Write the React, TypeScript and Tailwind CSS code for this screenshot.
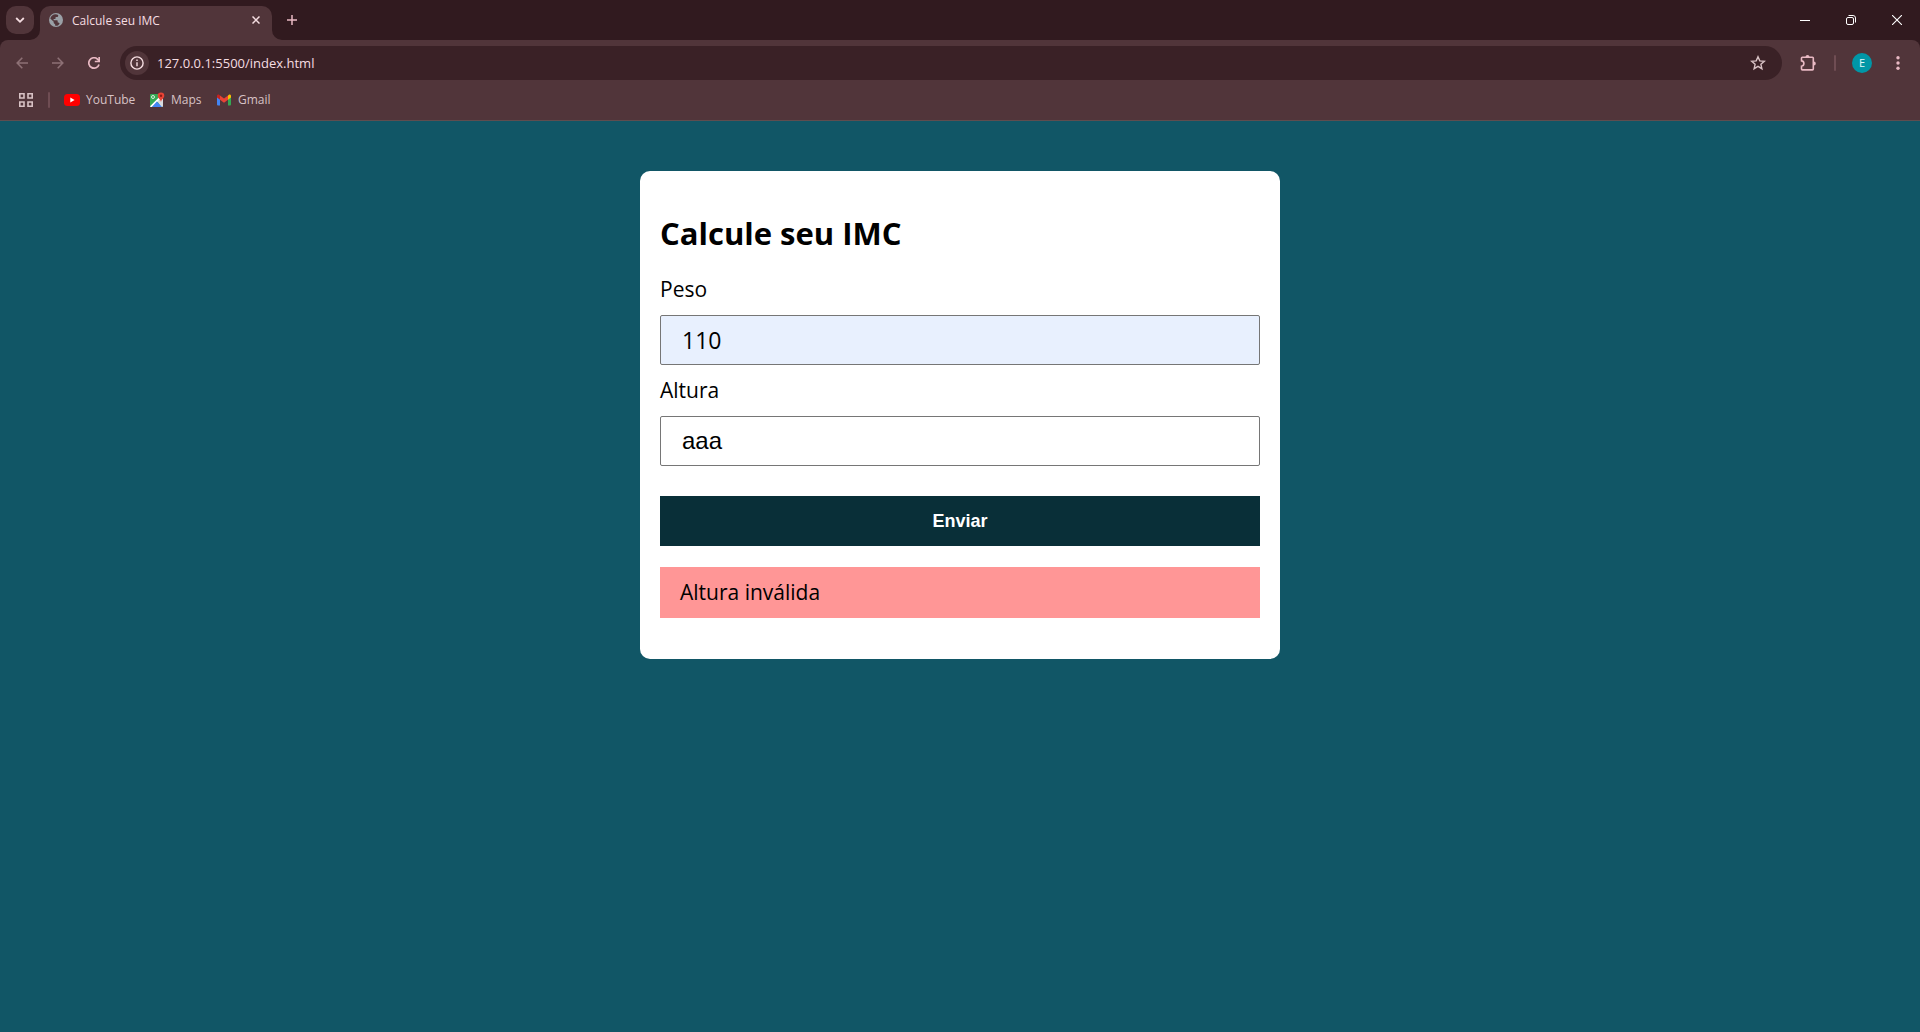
import { useState, type ReactNode } from "react";

const icon = "block shrink-0";

function Globe() {
  return (
    <svg className={icon} width="14" height="14" viewBox="0 0 14 14" aria-hidden="true">
      <circle cx="7" cy="7" r="7" fill="#9aa0a6" />
      <path
        d="M6.6 1.3C4 1.300 1.900 3 1.300 5.400l3.400 3.400v1.200l1.500 1.500v1.200c.9.200 1.900.2 2.800-.2l1.400-1.400c.3-.9-.2-1.700-1.100-1.700h-.6V8c0-.4-.3-.7-.7-.7H4.600V5.900h1.300c.4 0 .7-.3.700-.7V4h1.300c.7 0 1.300-.6 1.300-1.300V2c-.8-.5-1.700-.7-2.600-.7z"
        fill="#51353a"
      />
    </svg>
  );
}

function YouTube() {
  return (
    <svg className={icon} width="16" height="16" viewBox="0 0 16 16" aria-hidden="true">
      <rect x="0" y="2" width="16" height="12" rx="3.5" fill="#ff0000" />
      <path d="M6.3 5.6v4.8L10.6 8z" fill="#fff" />
    </svg>
  );
}

function Maps() {
  return (
    <svg className={icon} width="16" height="16" viewBox="0 0 16 16" aria-hidden="true">
      <rect x="1" y="2" width="13" height="13" rx="1" fill="#34a853" />
      <path d="M14 6v8a1 1 0 0 1-1 1h-1L8.5 9.5z" fill="#dadce0" />
      <path d="M1 14.2L11.5 3.8l1.6 1.6L3 15H2a1 1 0 0 1-1-.8z" fill="#fff" />
      <path d="M5.2 12.4L7.8 9.6 13 15H3z" fill="#4285f4" />
      <circle cx="4" cy="5" r="1.5" fill="none" stroke="#fff" strokeWidth=".8" />
      <path d="M12 0.5a3.3 3.3 0 0 0-3.3 3.3c0 2.5 2.7 3.3 3.3 6.2.6-2.9 3.3-3.7 3.3-6.2A3.3 3.3 0 0 0 12 .5z" fill="#ea4335" />
      <circle cx="12" cy="3.8" r="1.2" fill="#8c1d18" />
    </svg>
  );
}

function Gmail() {
  return (
    <svg className={icon} width="16" height="16" viewBox="0 0 16 16" aria-hidden="true">
      <path d="M1 4.5l3 2.2v6.8H2a1 1 0 0 1-1-1z" fill="#4285f4" />
      <path d="M12 6.7l3-2.2v8a1 1 0 0 1-1 1h-2z" fill="#34a853" />
      <path d="M12 3.5l.7-.6C13.7 2.2 15 2.900 15 4v1.500l-3 2.300z" fill="#fbbc04" />
      <path d="M4 3.5l4 3 4-3v4.300l-4 3-4-3z" fill="#ea4335" />
      <path d="M1 4c0-1.100 1.300-1.800 2.300-1.100l.7.600v4.300L1 5.500z" fill="#c5221f" />
    </svg>
  );
}

function IconButton({ label, className, children }: { label: string; className: string; children: ReactNode }) {
  return (
    <button type="button" aria-label={label} className={`flex shrink-0 items-center justify-center ${className}`}>
      {children}
    </button>
  );
}

function TabStrip() {
  return (
    <div className="flex h-10 bg-[#311a1f]">
      <div className="pt-1.5 pl-1.5">
        <IconButton label="Pesquisar guias" className="size-7 rounded-[10px] bg-[#51353a]">
          <svg width="10" height="8" viewBox="0 0 10 8" fill="none" stroke="#f5dde1" strokeWidth="1.8" aria-hidden="true">
            <path d="M1.2 2L5 5.800 8.800 2" />
          </svg>
        </IconButton>
      </div>
      <div className="mt-1.5 flex items-end">
        <svg className="-ml-1 block" width="10" height="10" viewBox="0 0 10 10" aria-hidden="true">
          <path d="M10 0v10H0A10 10 0 0 0 10 0z" fill="#51353a" />
        </svg>
        <div className="flex h-full w-[232px] items-center rounded-t-[10px] bg-[#51353a] pr-2 pb-1.5 pl-[9px]">
          <Globe />
          <span className="ml-[9px] flex-1 pt-px text-xs text-[#f5dde1]">Calcule seu IMC</span>
          <IconButton label="Fechar guia" className="size-4">
            <svg width="8" height="8" viewBox="0 0 8 8" stroke="#f5dde1" strokeWidth="1.500" aria-hidden="true">
              <path d="M.5.5l7 7M7.5.5l-7 7" />
            </svg>
          </IconButton>
        </div>
        <svg className="block" width="10" height="10" viewBox="0 0 10 10" aria-hidden="true">
          <path d="M0 0v10h10A10 10 0 0 1 0 0z" fill="#51353a" />
        </svg>
      </div>
      <IconButton label="Nova guia" className="h-10 w-5">
        <svg width="10" height="10" viewBox="0 0 10 10" stroke="#e9b9c3" strokeWidth="1.500" aria-hidden="true">
          <path d="M5 0v10M0 5h10" />
        </svg>
      </IconButton>
      <div className="ml-auto flex">
        <IconButton label="Minimizar" className="h-10 w-[46px]">
          <svg width="10" height="10" viewBox="0 0 10 10" aria-hidden="true">
            <path d="M0 5h10v1H0z" fill="#fff" />
          </svg>
        </IconButton>
        <IconButton label="Restaurar" className="h-10 w-[46px]">
          <svg width="10" height="10" viewBox="0 0 10 10" fill="none" stroke="#fff" aria-hidden="true">
            <rect x=".5" y="2.500" width="7" height="7" rx="1.500" />
            <path d="M2.5.5H7A2.500 2.500 0 0 1 9.500 3v4.500" />
          </svg>
        </IconButton>
        <IconButton label="Fechar" className="h-10 w-[46px]">
          <svg width="10" height="10" viewBox="0 0 10 10" stroke="#fff" strokeWidth="1.100" aria-hidden="true">
            <path d="M0 0l10 10M10 0L0 10" />
          </svg>
        </IconButton>
      </div>
    </div>
  );
}

function Toolbar() {
  const [url, setUrl] = useState("127.0.0.1:5500/index.html");
  return (
    <div className="bg-[#311a1f]">
      <div className="flex items-center rounded-t-[8px] bg-[#51353a] px-1 pt-1.5">
        <IconButton label="Voltar" className="h-[34px] w-9">
          <svg width="12" height="12" viewBox="0 0 12 12" fill="none" stroke="#8d7075" strokeWidth="1.600" aria-hidden="true">
            <path d="M12 6H1.200M6.300.8L1.200 6l5.100 5.200" />
          </svg>
        </IconButton>
        <IconButton label="Avançar" className="h-[34px] w-9">
          <svg width="12" height="12" viewBox="0 0 12 12" fill="none" stroke="#8d7075" strokeWidth="1.600" aria-hidden="true">
            <path d="M0 6h10.800M5.700.8L10.800 6l-5.100 5.200" />
          </svg>
        </IconButton>
        <IconButton label="Recarregar" className="h-[34px] w-9">
          <svg width="12" height="12" viewBox="0 0 12 12" fill="none" stroke="#e9b9c3" strokeWidth="1.700" aria-hidden="true">
            <path d="M11 7.400A5.200 5.200 0 1 1 9.700 2.300L11 3.700" />
            <path d="M11.200 0v4.500H6.800" />
          </svg>
        </IconButton>
        <div className="ml-2 flex h-[34px] flex-1 items-center rounded-full bg-[#3a2126] pr-4 pl-[5px]">
          <IconButton label="Ver informações do site" className="size-6 rounded-full bg-[#51353a]">
            <svg width="14" height="14" viewBox="0 0 14 14" fill="none" stroke="#f5dde1" strokeWidth="1.400" aria-hidden="true">
              <circle cx="7" cy="7" r="6.100" />
              <path d="M7 6.200v4M7 3.600v1.500" />
            </svg>
          </IconButton>
          <input
            aria-label="Barra de endereço"
            value={url}
            onChange={(e) => setUrl(e.target.value)}
            className="ml-2 h-6 flex-1 bg-transparent text-[13px] text-[#f5dde1] outline-none"
          />
          <IconButton label="Adicionar aos favoritos" className="size-4">
            <svg width="16" height="16" viewBox="0 0 16 16" fill="none" stroke="#d8c2c5" strokeWidth="1.400" aria-hidden="true">
              <path d="M8 1.800l1.800 4.100 4.500.4-3.400 3 1 4.400L8 11.400l-3.900 2.300 1-4.400-3.400-3 4.500-.4z" />
            </svg>
          </IconButton>
        </div>
        <IconButton label="Extensões" className="ml-2 h-[34px] w-9">
          <svg width="18" height="18" viewBox="0 0 18 18" fill="none" aria-hidden="true">
            <path
              d="M3.300 3.300h10.200a.8.8 0 0 1 .8.8v11a.8.8 0 0 1-.8.8H3.300a.8.8 0 0 1-.8-.8v-2.800c1.500-.2 2.400-1.200 2.400-2.700S4 7.100 2.500 6.900V4.100a.8.8 0 0 1 .8-.8z"
              stroke="#e9b9c3"
              strokeWidth="1.600"
            />
            <path d="M6.500 3a2 2 0 0 1 4 0zM14.800 7.600a2 2 0 0 1 0 4z" fill="#e9b9c3" />
          </svg>
        </IconButton>
        <span className="ml-2 h-4 w-0.5 rounded-full bg-[#6f4d53]" />
        <IconButton label="Perfil E" className="ml-4 size-5 rounded-full bg-[#0097a7] text-[11px] text-[#e0f7fa]">
          E
        </IconButton>
        <IconButton label="Menu do Chrome" className="ml-2 h-[34px] w-9">
          <svg width="4" height="14" viewBox="0 0 4 14" fill="#e9b9c3" aria-hidden="true">
            <circle cx="2" cy="1.800" r="1.700" />
            <circle cx="2" cy="7" r="1.700" />
            <circle cx="2" cy="12.200" r="1.700" />
          </svg>
        </IconButton>
      </div>
    </div>
  );
}

const bookmarks = [
  { name: "YouTube", icon: <YouTube />, width: "w-[69px]" },
  { name: "Maps", icon: <Maps />, width: "w-[51px]" },
  { name: "Gmail", icon: <Gmail />, width: "w-[52px]" },
];

function BookmarksBar() {
  return (
    <div className="flex h-[41px] items-center border-b border-[#5f4d4f] bg-[#51353a] pl-[18px]">
      <IconButton label="Apps" className="size-4">
        <svg width="16" height="16" viewBox="0 0 16 16" fill="none" stroke="#d8c2c5" strokeWidth="1.600" aria-hidden="true">
          <path d="M1.800 1.800h4.200v4.200H1.800zM10 1.800h4.200v4.200H10zM1.800 10h4.200v4.200H1.800zM10 10h4.200v4.200H10z" />
        </svg>
      </IconButton>
      <span className="ml-3.5 h-4 w-0.5 rounded-full bg-[#6f4d53]" />
      <nav className="ml-3.5 flex gap-4">
        {bookmarks.map((b) => (
          <a key={b.name} href={`#${b.name}`} className={`flex items-center gap-1.5 text-xs text-[#d8c2c5] ${b.width}`}>
            {b.icon}
            {b.name}
          </a>
        ))}
      </nav>
    </div>
  );
}

export default function App() {
  const [peso, setPeso] = useState("110");
  const [altura, setAltura] = useState("aaa");
  return (
    <div className="flex min-h-screen flex-col bg-[#115666] font-['Open_Sans',sans-serif]">
      <header>
        <TabStrip />
        <Toolbar />
        <BookmarksBar />
      </header>
      <main className="mx-auto mt-[50px] w-full max-w-[640px] rounded-[10px] bg-white px-5 pt-10 pb-[41px] text-[21px] leading-[31px] text-black">
        <h1 className="text-[31px] leading-[44px] font-bold">Calcule seu IMC</h1>
        <form className="mt-[19px] flex flex-col" onSubmit={(e) => e.preventDefault()}>
          <label htmlFor="peso">Peso</label>
          <input
            id="peso"
            value={peso}
            onChange={(e) => setPeso(e.target.value)}
            className="mt-2.5 h-[50px] rounded-xs border border-[#767676] bg-[#e8f0fe] px-[21px] text-[23px]"
          />
          <label htmlFor="altura" className="mt-2.5">
            Altura
          </label>
          <input
            id="altura"
            value={altura}
            onChange={(e) => setAltura(e.target.value)}
            className="mt-2.5 h-[50px] rounded-xs border border-[#767676] bg-white px-[21px] font-['Liberation_Sans',sans-serif] text-2xl"
          />
          <button
            type="submit"
            className="mt-[30px] h-[50px] bg-[#092f38] font-['Liberation_Sans',sans-serif] text-lg font-bold text-white"
          >
            Enviar
          </button>
        </form>
        <p role="alert" className="mt-[21px] bg-[#ff9696] px-5 py-2.5">
          Altura inválida
        </p>
      </main>
    </div>
  );
}
